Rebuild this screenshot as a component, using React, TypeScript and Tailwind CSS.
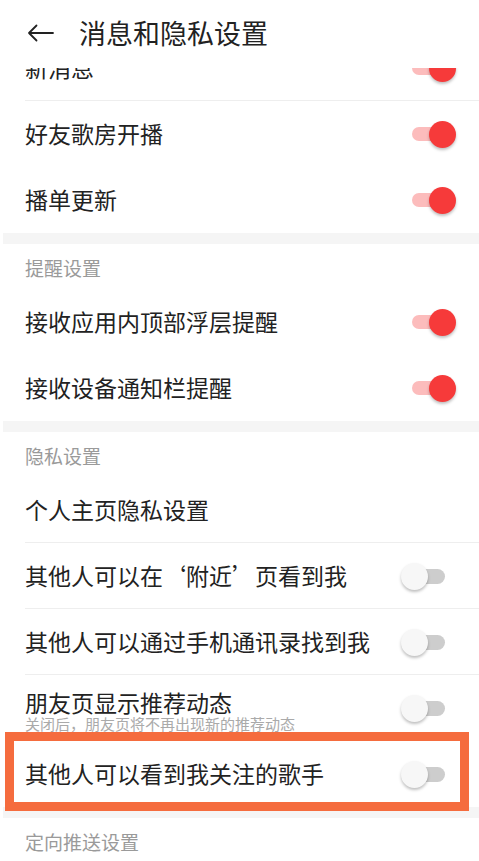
import React from 'react';

type Row = {
  label: string;
  sub?: string;
  toggle?: 'on' | 'off';
  divider?: boolean;
  marked?: boolean;
};

const font = "font-['Noto_Sans_CJK_SC','Noto_Sans',sans-serif]";

function Toggle({ on }: { on: boolean }) {
  if (on) {
    return (
      <div className="relative w-[56px] h-[28px] flex items-center">
        <div className="absolute left-[11px] w-[36px] h-[14px] rounded-full bg-[#fcbcbc]" />
        <div className="absolute right-[1px] w-[27px] h-[27px] rounded-full bg-[#f63a3a] shadow-[0_2px_3px_rgba(0,0,0,0.25)]" />
      </div>
    );
  }
  return (
    <div className="relative w-[56px] h-[28px] flex items-center">
      <div className="absolute left-[7px] w-[37px] h-[15px] rounded-full bg-[#cdcdcd]" />
      <div className="absolute left-0 w-[27px] h-[27px] rounded-full bg-[#f7f7f7] shadow-[0_2px_3px_rgba(0,0,0,0.25)]" />
    </div>
  );
}

function SettingRow({ row }: { row: Row }) {
  return (
    <div className="relative h-[66px] flex items-center pl-[25px] pr-[22px]">
      <div className={`flex-1 flex flex-col ${row.sub ? 'pt-[4px]' : 'pb-[2px]'}`}>
        <span className={`block text-[23px] text-[#222] ${row.sub ? 'leading-[28px]' : 'leading-[30px]'}`}>{row.label}</span>
        {row.sub && <span className="block text-[15px] leading-[16px] text-[#aaa]">{row.sub}</span>}
      </div>
      {row.toggle && <Toggle on={row.toggle === 'on'} />}
      {row.divider && <div className="absolute left-[25px] right-0 bottom-0 h-px bg-[#eeeeee]" />}
      {row.marked && (
        <div className="absolute left-[5px] w-[464px] top-[-9px] bottom-[-4px] border-[9px] border-[#f56c3e] pointer-events-none" />
      )}
    </div>
  );
}

function SectionTitle({ title }: { title: string }) {
  return (
    <div className="h-[45px] flex items-center pl-[25px] pt-[3px]">
      <span className="text-[19px] text-[#9a9a9a]">{title}</span>
    </div>
  );
}

function Gap() {
  return <div className="h-[11px] ml-[3px] bg-[#f5f5f5]" />;
}

export default function App() {
  return (
    <div className={`w-[479px] h-[861px] bg-white overflow-hidden flex flex-col ${font}`}>
      <div className="h-[68px] shrink-0 flex items-center bg-white relative z-10 pb-[2px]">
        <svg className="ml-[27px]" width="27" height="18" viewBox="0 0 27 18" fill="none">
          <path d="M26 9H2M9.5 1.5L2 9l7.5 7.5" stroke="#222" strokeWidth="1.8" strokeLinecap="round" strokeLinejoin="round" />
        </svg>
        <span className="ml-[25px] text-[27px] text-[#222]">消息和隐私设置</span>
      </div>
      <div className="-mt-[33px]">
        <SettingRow row={{ label: '新消息', toggle: 'on', divider: true }} />
        <SettingRow row={{ label: '好友歌房开播', toggle: 'on' }} />
        <SettingRow row={{ label: '播单更新', toggle: 'on' }} />
        <Gap />
        <SectionTitle title="提醒设置" />
        <SettingRow row={{ label: '接收应用内顶部浮层提醒', toggle: 'on' }} />
        <SettingRow row={{ label: '接收设备通知栏提醒', toggle: 'on' }} />
        <Gap />
        <SectionTitle title="隐私设置" />
        <SettingRow row={{ label: '个人主页隐私设置', divider: true }} />
        <SettingRow row={{ label: '其他人可以在‘附近’页看到我', toggle: 'off', divider: true }} />
        <SettingRow row={{ label: '其他人可以通过手机通讯录找到我', toggle: 'off', divider: true }} />
        <SettingRow row={{ label: '朋友页显示推荐动态', sub: '关闭后，朋友页将不再出现新的推荐动态', toggle: 'off' }} />
        <SettingRow row={{ label: '其他人可以看到我关注的歌手', toggle: 'off', marked: true }} />
        <Gap />
        <SectionTitle title="定向推送设置" />
      </div>
    </div>
  );
}
